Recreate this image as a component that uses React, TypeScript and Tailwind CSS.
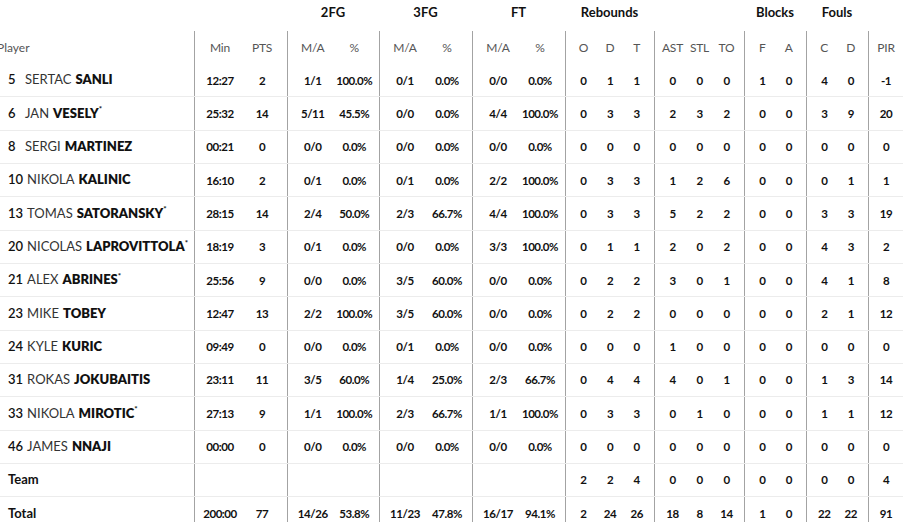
import React from "react";

type Row = {
  num?: string;
  first?: string;
  last?: string;
  star?: boolean;
  label?: string;
  min: string;
  pts: string;
  fg2: [string, string];
  fg3: [string, string];
  ft: [string, string];
  reb: [string, string, string];
  ast: [string, string, string];
  blk: [string, string];
  fls: [string, string];
  pir: string;
};

const rows: Row[] = [
  { num: "5", first: "SERTAC", last: "SANLI", min: "12:27", pts: "2", fg2: ["1/1", "100.0%"], fg3: ["0/1", "0.0%"], ft: ["0/0", "0.0%"], reb: ["0", "1", "1"], ast: ["0", "0", "0"], blk: ["1", "0"], fls: ["4", "0"], pir: "-1" },
  { num: "6", first: "JAN", last: "VESELY", star: true, min: "25:32", pts: "14", fg2: ["5/11", "45.5%"], fg3: ["0/0", "0.0%"], ft: ["4/4", "100.0%"], reb: ["0", "3", "3"], ast: ["2", "3", "2"], blk: ["0", "0"], fls: ["3", "9"], pir: "20" },
  { num: "8", first: "SERGI", last: "MARTINEZ", min: "00:21", pts: "0", fg2: ["0/0", "0.0%"], fg3: ["0/0", "0.0%"], ft: ["0/0", "0.0%"], reb: ["0", "0", "0"], ast: ["0", "0", "0"], blk: ["0", "0"], fls: ["0", "0"], pir: "0" },
  { num: "10", first: "NIKOLA", last: "KALINIC", min: "16:10", pts: "2", fg2: ["0/1", "0.0%"], fg3: ["0/1", "0.0%"], ft: ["2/2", "100.0%"], reb: ["0", "3", "3"], ast: ["1", "2", "6"], blk: ["0", "0"], fls: ["0", "1"], pir: "1" },
  { num: "13", first: "TOMAS", last: "SATORANSKY", star: true, min: "28:15", pts: "14", fg2: ["2/4", "50.0%"], fg3: ["2/3", "66.7%"], ft: ["4/4", "100.0%"], reb: ["0", "3", "3"], ast: ["5", "2", "2"], blk: ["0", "0"], fls: ["3", "3"], pir: "19" },
  { num: "20", first: "NICOLAS", last: "LAPROVITTOLA", star: true, min: "18:19", pts: "3", fg2: ["0/1", "0.0%"], fg3: ["0/0", "0.0%"], ft: ["3/3", "100.0%"], reb: ["0", "1", "1"], ast: ["2", "0", "2"], blk: ["0", "0"], fls: ["4", "3"], pir: "2" },
  { num: "21", first: "ALEX", last: "ABRINES", star: true, min: "25:56", pts: "9", fg2: ["0/0", "0.0%"], fg3: ["3/5", "60.0%"], ft: ["0/0", "0.0%"], reb: ["0", "2", "2"], ast: ["3", "0", "1"], blk: ["0", "0"], fls: ["4", "1"], pir: "8" },
  { num: "23", first: "MIKE", last: "TOBEY", min: "12:47", pts: "13", fg2: ["2/2", "100.0%"], fg3: ["3/5", "60.0%"], ft: ["0/0", "0.0%"], reb: ["0", "2", "2"], ast: ["0", "0", "0"], blk: ["0", "0"], fls: ["2", "1"], pir: "12" },
  { num: "24", first: "KYLE", last: "KURIC", min: "09:49", pts: "0", fg2: ["0/0", "0.0%"], fg3: ["0/1", "0.0%"], ft: ["0/0", "0.0%"], reb: ["0", "0", "0"], ast: ["1", "0", "0"], blk: ["0", "0"], fls: ["0", "0"], pir: "0" },
  { num: "31", first: "ROKAS", last: "JOKUBAITIS", min: "23:11", pts: "11", fg2: ["3/5", "60.0%"], fg3: ["1/4", "25.0%"], ft: ["2/3", "66.7%"], reb: ["0", "4", "4"], ast: ["4", "0", "1"], blk: ["0", "0"], fls: ["1", "3"], pir: "14" },
  { num: "33", first: "NIKOLA", last: "MIROTIC", star: true, min: "27:13", pts: "9", fg2: ["1/1", "100.0%"], fg3: ["2/3", "66.7%"], ft: ["1/1", "100.0%"], reb: ["0", "3", "3"], ast: ["0", "1", "0"], blk: ["0", "0"], fls: ["1", "1"], pir: "12" },
  { num: "46", first: "JAMES", last: "NNAJI", min: "00:00", pts: "0", fg2: ["0/0", "0.0%"], fg3: ["0/0", "0.0%"], ft: ["0/0", "0.0%"], reb: ["0", "0", "0"], ast: ["0", "0", "0"], blk: ["0", "0"], fls: ["0", "0"], pir: "0" },
  { label: "Team", min: "", pts: "", fg2: ["", ""], fg3: ["", ""], ft: ["", ""], reb: ["2", "2", "4"], ast: ["0", "0", "0"], blk: ["0", "0"], fls: ["0", "0"], pir: "4" },
  { label: "Total", min: "200:00", pts: "77", fg2: ["14/26", "53.8%"], fg3: ["11/23", "47.8%"], ft: ["16/17", "94.1%"], reb: ["2", "24", "26"], ast: ["18", "8", "14"], blk: ["1", "0"], fls: ["22", "22"], pir: "91" },
];

const widths = ["w-[93px]", "w-[92px]", "w-[93px]", "w-[93px]", "w-[89px]", "w-[90px]", "w-[62px]", "w-[62px]", "w-[35px]"];

function Group({ w, cells, cls }: { w: string; cells: string[]; cls: string }) {
  return (
    <div className={`${w} shrink-0 flex px-[4px] border-l border-[#a3a3a3] h-full`}>
      {cells.map((c, i) => (
        <div key={i} className={`flex-1 flex items-center justify-center whitespace-nowrap ${cls}`}>
          {c}
        </div>
      ))}
    </div>
  );
}

export default function App() {
  const groupLabels = ["", "2FG", "3FG", "FT", "Rebounds", "", "Blocks", "Fouls", ""];
  const headers = [
    ["Min", "PTS"],
    ["M/A", "%"],
    ["M/A", "%"],
    ["M/A", "%"],
    ["O", "D", "T"],
    ["AST", "STL", "TO"],
    ["F", "A"],
    ["C", "D"],
    ["PIR"],
  ];
  return (
    <div
      className="w-[903px] h-[522px] overflow-hidden bg-white text-[#111]"
      style={{ fontFamily: "Lato, 'Open Sans', sans-serif" }}
    >
      <div className="flex h-[31px]">
        <div className="w-[194px] shrink-0" />
        {groupLabels.map((g, i) => (
          <div key={i} className={`${widths[i]} shrink-0 flex justify-center pt-[4px] text-[13px] leading-[16px] font-bold text-[#111]`}>
            {g}
          </div>
        ))}
      </div>
      <div className="flex h-[33px]">
        <div className="w-[194px] shrink-0 flex items-center text-[12px] text-[#555]">
          <span className="relative -left-[3px]">Player</span>
        </div>
        {headers.map((h, i) => (
          <Group key={i} w={widths[i]} cells={h} cls="text-[12px] text-[#555] tracking-[-0.2px]" />
        ))}
      </div>
      {rows.map((r, ri) => {
        const groups = [
          [r.min, r.pts],
          r.fg2,
          r.fg3,
          r.ft,
          r.reb,
          r.ast,
          r.blk,
          r.fls,
          [r.pir],
        ];
        return (
          <div key={ri} className="flex h-[33.33px] border-b border-[#ececec]">
            <div className="w-[194px] shrink-0 flex items-center pl-[8px] text-[13px] whitespace-nowrap">
              {r.label ? (
                <span className="font-bold text-[#111]">{r.label}</span>
              ) : (
                <>
                  <span className="inline-block min-w-[13px] mr-[4px] font-semibold text-[#111]">{r.num}</span>
                  <span className="text-[#333]">{r.first}</span>
                  <span className="font-extrabold text-[#111] ml-[4px]">{r.last}</span>
                  {r.star && <span className="font-bold text-[8px] relative -top-[4px]">*</span>}
                </>
              )}
            </div>
            {groups.map((g, gi) => (
              <Group key={gi} w={widths[gi]} cells={g as string[]} cls="text-[11.5px] font-bold text-[#111] tracking-[-0.45px]" />
            ))}
          </div>
        );
      })}
    </div>
  );
}
